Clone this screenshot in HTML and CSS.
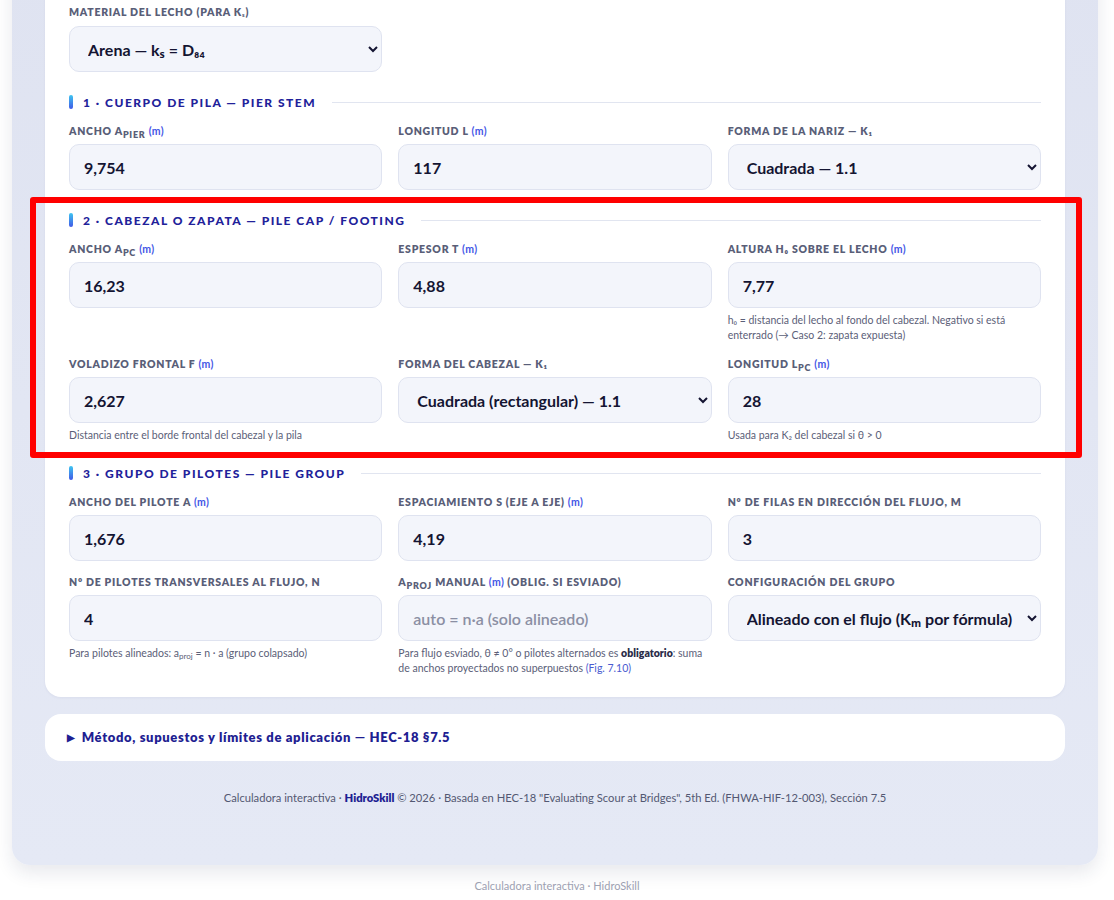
FILE: index.html
```html
<!DOCTYPE html>
<html lang="es">
<head>
<meta charset="utf-8">
<title>Socavación en pilas complejas — HidroSkill</title>
<link rel="stylesheet" href="styles.css">
</head>
<body>
<div class="frame">
  <div class="card">
    <div class="field single">
      <label class="lbl">Material del lecho (para K<span class="sm">ₛ</span>)</label>
      <select class="ctl"><option>Arena — kₛ = D₈₄</option></select>
    </div>

    <div class="sec-head"><span class="bar"></span><span class="sec-title">1 · Cuerpo de pila — Pier stem</span><span class="rule"></span></div>
    <div class="grid">
      <div class="field">
        <label class="lbl">Ancho a<sub>PIER</sub> <span class="u">(m)</span></label>
        <input class="ctl" value="9,754">
      </div>
      <div class="field">
        <label class="lbl">Longitud L <span class="u">(m)</span></label>
        <input class="ctl" value="117">
      </div>
      <div class="field">
        <label class="lbl">Forma de la nariz — K₁</label>
        <select class="ctl"><option>Cuadrada — 1.1</option></select>
      </div>
    </div>

    <div class="sec-head"><span class="bar"></span><span class="sec-title">2 · Cabezal o zapata — Pile cap / footing</span><span class="rule"></span></div>
    <div class="grid">
      <div class="field">
        <label class="lbl">Ancho a<sub>PC</sub> <span class="u">(m)</span></label>
        <input class="ctl" value="16,23">
      </div>
      <div class="field">
        <label class="lbl">Espesor T <span class="u">(m)</span></label>
        <input class="ctl" value="4,88">
      </div>
      <div class="field">
        <label class="lbl">Altura h₀ sobre el lecho <span class="u">(m)</span></label>
        <input class="ctl" value="7,77">
        <p class="help">h₀ = distancia del lecho al fondo del cabezal. Negativo si está enterrado (→ Caso 2: zapata expuesta)</p>
      </div>
      <div class="field">
        <label class="lbl">Voladizo frontal f <span class="u">(m)</span></label>
        <input class="ctl" value="2,627">
        <p class="help">Distancia entre el borde frontal del cabezal y la pila</p>
      </div>
      <div class="field">
        <label class="lbl">Forma del cabezal — K₁</label>
        <select class="ctl"><option>Cuadrada (rectangular) — 1.1</option></select>
      </div>
      <div class="field">
        <label class="lbl">Longitud L<sub>PC</sub> <span class="u">(m)</span></label>
        <input class="ctl" value="28">
        <p class="help">Usada para K₂ del cabezal si θ &gt; 0</p>
      </div>
    </div>

    <div class="sec-head"><span class="bar"></span><span class="sec-title">3 · Grupo de pilotes — Pile group</span><span class="rule"></span></div>
    <div class="grid">
      <div class="field">
        <label class="lbl">Ancho del pilote a <span class="u">(m)</span></label>
        <input class="ctl" value="1,676">
      </div>
      <div class="field">
        <label class="lbl">Espaciamiento s (eje a eje) <span class="u">(m)</span></label>
        <input class="ctl" value="4,19">
      </div>
      <div class="field">
        <label class="lbl">Nº de filas en dirección del flujo, m</label>
        <input class="ctl" value="3">
      </div>
      <div class="field">
        <label class="lbl">Nº de pilotes transversales al flujo, n</label>
        <input class="ctl" value="4">
        <p class="help">Para pilotes alineados: a<sub>proj</sub> = n · a (grupo colapsado)</p>
      </div>
      <div class="field">
        <label class="lbl">a<sub>PROJ</sub> manual <span class="u">(m)</span> (oblig. si esviado)</label>
        <input class="ctl" placeholder="auto = n·a (solo alineado)">
        <p class="help">Para flujo esviado, θ ≠ 0° o pilotes alternados es <b>obligatorio</b>: suma de anchos proyectados no superpuestos <span class="ref">(Fig. 7.10)</span></p>
      </div>
      <div class="field">
        <label class="lbl">Configuración del grupo</label>
        <select class="ctl"><option>Alineado con el flujo (Kₘ por fórmula)</option></select>
      </div>
    </div>
  </div>

  <details class="method">
    <summary>Método, supuestos y límites de aplicación — HEC-18 §7.5</summary>
  </details>

  <p class="foot">Calculadora interactiva · <b>HidroSkill</b> © 2026 · Basada en HEC-18 "Evaluating Scour at Bridges", 5th Ed. (FHWA-HIF-12-003), Sección 7.5</p>
</div>
<p class="outer-foot">Calculadora interactiva · HidroSkill</p>

<div class="highlight"></div>
</body>
</html>
```

FILE: styles.css
```css
* { box-sizing: border-box; }
html, body { margin: 0; padding: 0; }
body {
  background: #ffffff;
  font-family: "Lato", "Noto Sans", sans-serif;
  color: #161634;
  overflow: hidden;
  position: relative;
}
.frame {
  width: 1086px;
  margin: -52px 0 0 12px;
  padding: 33px 33px 60px;
  background: linear-gradient(180deg, #dfe3f1 0%, #e5e9f5 100%);
  border-radius: 0 0 18px 18px;
  box-shadow: 0 8px 18px rgba(30, 40, 80, 0.10);
}
.card {
  background: #ffffff;
  border-radius: 16px;
  padding: 24px 24px 21px;
  box-shadow: 0 1px 3px rgba(30, 40, 90, 0.05);
}
.field { display: flex; flex-direction: column; min-width: 0; }
.field.single { width: 313px; }
.lbl {
  display: block;
  font-size: 10.5px;
  line-height: 14px;
  font-weight: 800;
  letter-spacing: 0.07em;
  text-transform: uppercase;
  color: #595e78;
  margin-bottom: 6px;
  white-space: nowrap;
}
.lbl sub { font-size: 9px; line-height: 0; vertical-align: -3px; }
.lbl .sm { font-size: 8px; }
.lbl .u { color: #4356e6; text-transform: none; font-weight: 700; letter-spacing: 0.03em; }
.ctl {
  height: 46px;
  width: 100%;
  border: 1px solid #dfe3f0;
  border-radius: 10px;
  background: #f3f5fb;
  font-family: inherit;
  font-size: 16px;
  font-weight: 700;
  color: #141432;
  padding: 0 14px;
  outline: none;
}
select.ctl { padding: 0 10px 0 14px; }
.ctl::placeholder { color: #8b8fa3; font-weight: 600; }
.help {
  margin: 5px 0 0;
  font-size: 10.5px;
  line-height: 15px;
  color: #5b6078;
}
.help sub { font-size: 8px; line-height: 0; vertical-align: -2px; }
.help b { color: #2a2c48; font-weight: 800; }
.help .ref { color: #4a5bd0; }
.grid {
  display: grid;
  grid-template-columns: repeat(3, 1fr);
  column-gap: 16px;
  row-gap: 14px;
}
.sec-head {
  display: flex;
  align-items: center;
  gap: 10px;
  margin: 22px 0 14px;
  height: 16px;
}
.bar {
  width: 4px;
  height: 14px;
  border-radius: 2px;
  background: linear-gradient(180deg, #3ec5f0 0%, #4159e6 100%);
  flex: none;
}
.sec-title {
  font-size: 12px;
  font-weight: 900;
  letter-spacing: 0.125em;
  text-transform: uppercase;
  color: #21219a;
  white-space: nowrap;
}
.rule { flex: 1; height: 1px; background: #e1e5f0; margin-left: 6px; }
.method {
  margin-top: 17px;
  background: #ffffff;
  border-radius: 16px;
  padding: 15px 22px;
}
.method summary {
  font-size: 13px;
  line-height: 17px;
  font-weight: 800;
  letter-spacing: 0.05em;
  color: #1e1e92;
  list-style: none;
  cursor: pointer;
}
.method summary::before {
  content: "▶";
  font-size: 10px;
  margin-right: 6px;
  vertical-align: 1px;
}
.foot {
  margin: 30px 0 0;
  text-align: center;
  font-size: 11.2px;
  line-height: 14px;
  color: #535872;
}
.foot b { color: #1e1e92; font-weight: 800; }
.outer-foot {
  margin: 14px 0 0;
  text-align: center;
  font-size: 11px;
  color: #9da1b2;
}
.highlight {
  position: absolute;
  left: 30px;
  top: 197px;
  width: 1052px;
  height: 261px;
  border: 6px solid #ff0000;
  border-radius: 3px;
  pointer-events: none;
}
```
